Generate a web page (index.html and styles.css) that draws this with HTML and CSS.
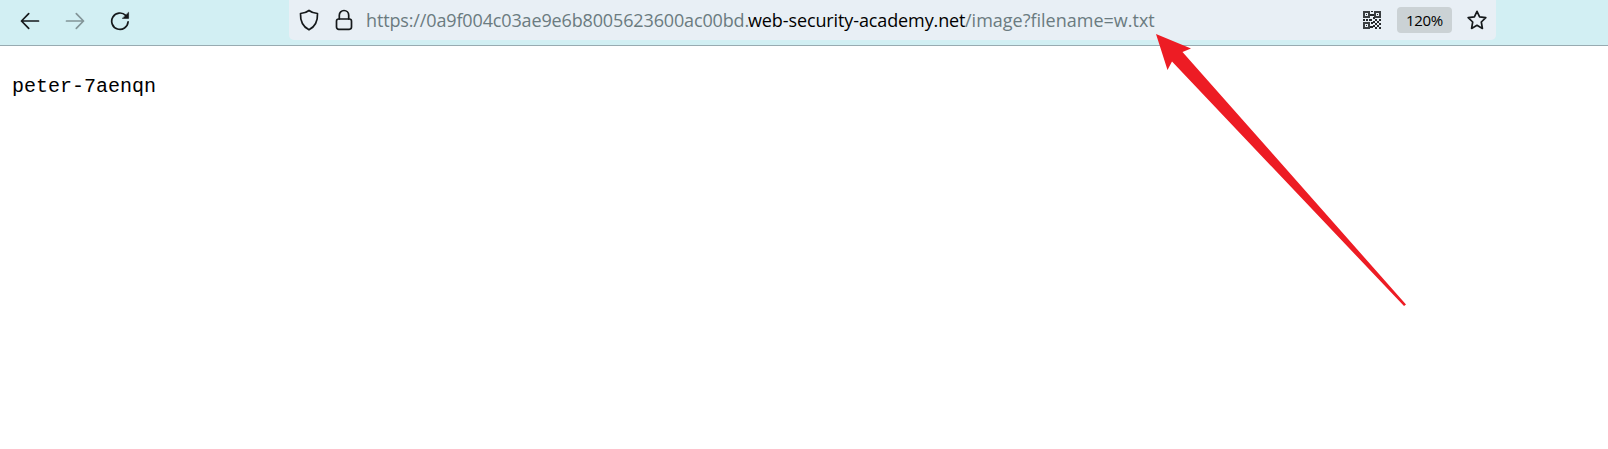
FILE: index.html
```html
<!DOCTYPE html>
<html lang="en">
<head>
<meta charset="utf-8">
<title>image</title>
<link rel="stylesheet" href="styles.css">
</head>
<body>
<header class="toolbar">
  <nav class="nav">
    <svg class="icon" width="20" height="20" viewBox="0 0 20 20"><path d="M18.500 10H1.500M8.700 2.700 1.500 10l7.200 7.300"/></svg>
    <svg class="icon disabled" width="20" height="20" viewBox="0 0 20 20"><path d="M1.500 10h17M11.300 2.700l7.200 7.300-7.200 7.300"/></svg>
    <svg class="icon" width="20" height="20" viewBox="0 0 20 20"><path d="M18.100 10.800a8.200 8.200 0 1 1-2.400-6.400"/><path class="solid" d="M18.600 1.600V7.400h-6z"/></svg>
  </nav>
  <div class="urlbar">
    <svg class="icon shield" width="20" height="22" viewBox="0 0 20 22"><path d="M10 1.500C7.600 3.400 4.800 4.300 1.500 4.500c-.3 7.200 2 13 8.500 16.300C16.500 17.500 18.800 11.700 18.500 4.500 15.200 4.300 12.400 3.400 10 1.500z"/></svg>
    <svg class="icon lock" width="18" height="22" viewBox="0 0 18 22"><path d="M4.300 10V6.200a4.700 4.700 0 0 1 9.400 0V10"/><rect x="1.500" y="10" width="15" height="10.300" rx="2.200"/></svg>
    <div class="url"><span class="sub">https://0a9f004c03ae9e6b8005623600ac00bd.</span><span class="domain">web-security-academy.net</span><span class="path">/image?filename=w.txt</span></div>
    <svg class="qr" width="18" height="18" viewBox="0 0 18 18"><path class="frame" d="M1 1h5v5H1zM12 1h5v5h-5zM1 12h5v5H1z"/><path class="dots" d="M3 3h1v1H3zM14 3h1v1h-1zM3 14h1v1H3zM8 0h2v1H8zM7 3h4v2H7zM0 8h2v2H0zM3 8h2v2H3zM6 8h3v2H6zM10 6h2v2h-2zM12 8h2v2h-2zM16 8h2v2h-2zM10 10h2v2h-2zM14 10h2v2h-2zM8 11h2v2H8zM12 12h2v2h-2zM16 12h2v2h-2zM10 14h2v2h-2zM14 14h2v2h-2zM7 15h3v2H7zM12 16h2v2h-2zM16 16h2v2h-2z"/></svg>
    <button class="zoom">120%</button>
    <svg class="icon star" width="20" height="20" viewBox="0 0 20 20"><path d="m10 1.300 2.600 5.600 6.200.8-4.500 4.300 1.100 6.400L10 15.300l-5.400 3.100L5.700 12 1.200 7.700l6.200-.8z"/></svg>
  </div>
</header>
<main class="page"><pre class="output">peter-7aenqn</pre></main>
<svg class="pointer" width="260" height="280" viewBox="1150 30 260 280"><path d="M1156 34 1191 48.500 1182.500 52 1406 304.500 1404 306 1172 61.500 1167.500 70z"/></svg>
</body>
</html>
```
FILE: styles.css
```css
* { box-sizing: border-box; }
body { margin: 0; background: #fff; overflow: hidden; }
.toolbar { display: flex; height: 46px; background: #d2eff3; border-bottom: 1px solid #98abb1; }
.nav { display: flex; width: 289px; height: 41px; padding-left: 20px; gap: 25px; align-items: center; }
.icon { flex: none; fill: none; stroke: #15191b; stroke-width: 1.7; stroke-linecap: round; stroke-linejoin: round; }
.icon .solid { fill: #15191b; stroke-width: .6; }
.icon.disabled { stroke: #839598; }
.urlbar { display: flex; align-items: center; width: 1207px; height: 40px; padding-left: 10px; background: #e8eff5; border-radius: 0 0 5px 5px; }
.lock { margin-left: 16px; }
.url { display: flex; width: 983px; margin-left: 13px; font: 18px/26px "Open Sans", "Noto Sans", sans-serif; color: #6b7b80; white-space: pre; }
.sub { width: 382px; letter-spacing: -.14px; }
.domain { width: 217px; color: #000; letter-spacing: -.11px; }
.qr { margin-left: 14px; flex: none; }
.qr .frame { fill: none; stroke: #3a3e41; stroke-width: 2; }
.qr .dots { fill: #24282b; }
.zoom { flex: none; width: 55px; height: 26px; margin-left: 16px; padding: 0; border: 0; border-radius: 4px; background: #cbd2d5; color: #000; font: 15px/26px "Open Sans", sans-serif; letter-spacing: -.3px; }
.star { margin-left: 15px; }
.page { padding: 27px 12px; }
.output { margin: 0; font: 20px/28px "Liberation Mono", monospace; color: #000; }
.pointer { position: absolute; left: 1150px; top: 30px; fill: #ed1c24; }
```
